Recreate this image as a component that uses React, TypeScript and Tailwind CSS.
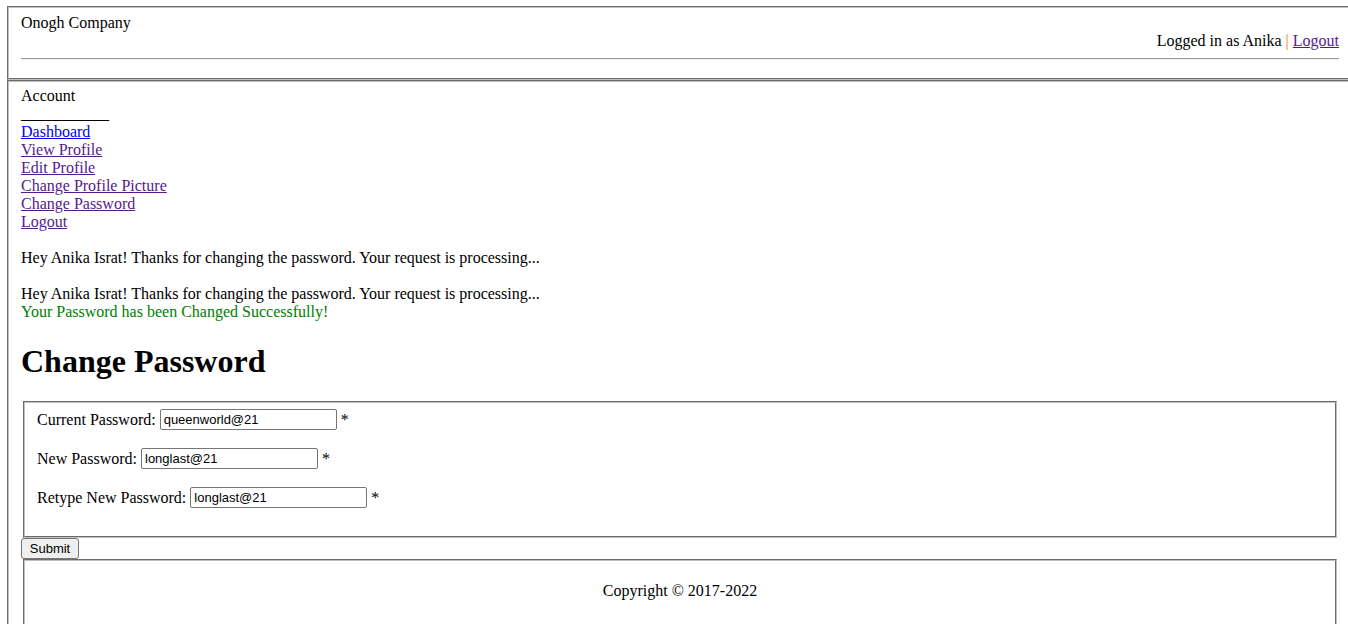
import { useState } from "react";
import type { ReactNode } from "react";

const visited = "text-[#551a8b] underline";
const frame = "border-2 border-[#c0c0c0] [border-style:groove]";

const menu = [
  { label: "Dashboard", href: "#dashboard", className: "text-[#0000ee] underline" },
  { label: "View Profile", href: "#view-profile", className: visited },
  { label: "Edit Profile", href: "#edit-profile", className: visited },
  { label: "Change Profile Picture", href: "#picture", className: visited },
  { label: "Change Password", href: "#password", className: visited },
  { label: "Logout", href: "#logout", className: visited },
];

function Panel({ children, className }: { children: ReactNode; className: string }) {
  return <div className={`${frame} px-3 ${className}`}>{children}</div>;
}

function PasswordField({ id, label, initial }: { id: string; label: string; initial: string }) {
  const [value, setValue] = useState(initial);
  return (
    <div className="flex items-center gap-1">
      <label htmlFor={id}>{label}</label>
      <input
        id={id}
        type="text"
        value={value}
        onChange={(e) => setValue(e.target.value)}
        className="h-[21px] w-[177px] rounded-xs border border-[#767676] bg-white px-[3px] font-['Liberation_Sans',Arial,sans-serif] text-[13px] leading-4"
      />
      <span>*</span>
    </div>
  );
}

export default function App() {
  return (
    <div className="min-h-screen overflow-x-hidden bg-white pt-1.5 pl-[7px] font-['Liberation_Serif','Times_New_Roman',serif] text-base leading-[18px] text-black">
      <div className="-mr-[5px]">
        <Panel className="pt-1.5 pb-[18px]">
          <header>
            <div>Onogh Company</div>
            <div className="text-right">
              Logged in as Anika <span className="text-[#f08010]">|</span>{" "}
              <a href="#logout" className={visited}>Logout</a>
            </div>
            <hr className="mt-2 border-t border-b border-t-[#999999] border-b-[#eeeeee]" />
          </header>
        </Panel>
        <Panel className="pt-[5px] pb-3">
          <div>Account</div>
          <div>___________</div>
          <nav className="flex flex-col items-start">
            {menu.map((item) => (
              <a key={item.label} href={item.href} className={item.className}>{item.label}</a>
            ))}
          </nav>
          <p className="mt-[18px]">Hey Anika Israt! Thanks for changing the password. Your request is processing...</p>
          <p className="mt-[18px]">Hey Anika Israt! Thanks for changing the password. Your request is processing...</p>
          <p className="text-[#008000]">Your Password has been Changed Successfully!</p>
          <h1 className="my-[22px] text-[32px] leading-9 font-bold">Change Password</h1>
          <form onSubmit={(e) => e.preventDefault()}>
            <fieldset className={`${frame} mx-0.5 flex flex-col gap-[18px] px-3 pt-1.5 pb-7`}>
              <PasswordField id="current" label="Current Password:" initial="queenworld@21" />
              <PasswordField id="new" label="New Password:" initial="longlast@21" />
              <PasswordField id="retype" label="Retype New Password:" initial="longlast@21" />
            </fieldset>
            <button
              type="submit"
              className="block h-[21px] w-[58px] rounded-[3px] border border-[#767676] bg-[#efefef] font-['Liberation_Sans',Arial,sans-serif] text-[13px] leading-4"
            >
              Submit
            </button>
          </form>
          <footer className={`${frame} mx-0.5 px-3 pt-[21px] pb-7 text-center`}>Copyright © 2017-2022</footer>
        </Panel>
      </div>
    </div>
  );
}
